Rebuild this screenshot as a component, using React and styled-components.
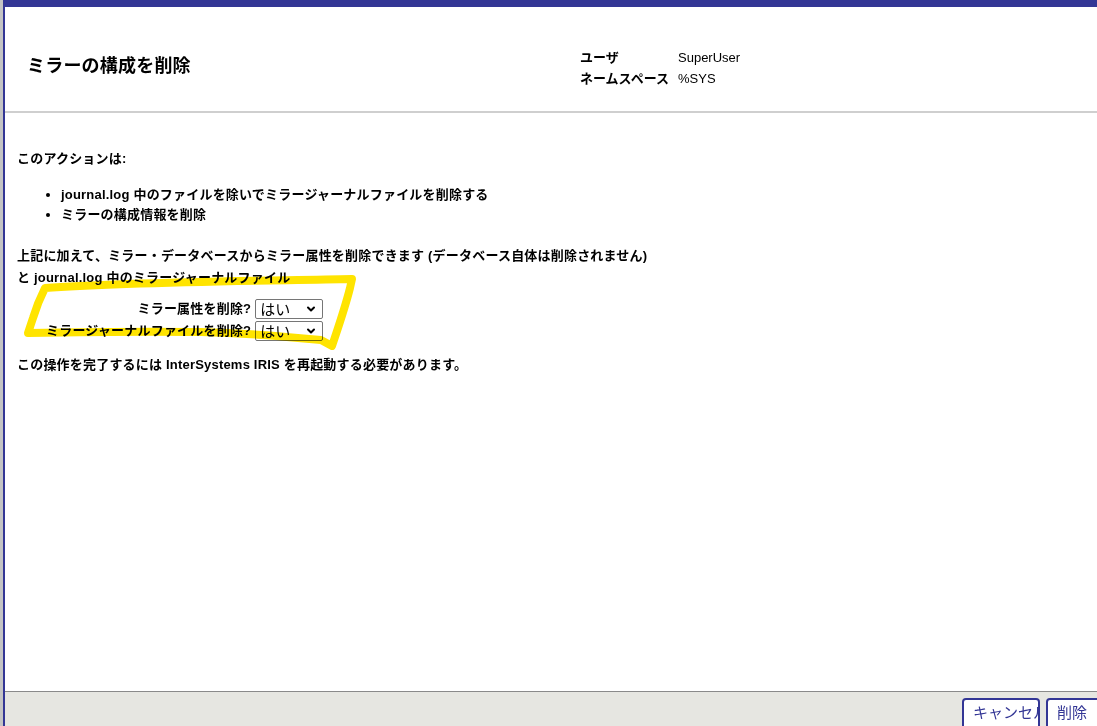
import React from "react";
import styled, { createGlobalStyle } from "styled-components";
import { ChevronDown } from "lucide-react";

const GlobalStyle = createGlobalStyle`
  html, body {
    margin: 0;
    padding: 0;
    background: #c4c4c4;
    overflow: hidden;
  }
  body {
    font-family: "Liberation Sans", "Noto Sans CJK JP", sans-serif;
    color: #000;
  }
`;

const Page = styled.div`
  display: flex;
  height: 726px;
  padding-left: 3px;
`;

const Dialog = styled.div`
  flex: 1;
  display: flex;
  flex-direction: column;
  background: #fff;
  border-top: 7px solid #333695;
  border-left: 2px solid #333695;
  min-width: 0;
`;

const Header = styled.div`
  display: flex;
  align-items: center;
  height: 106px;
  padding-top: 10px;
  box-sizing: border-box;
  border-bottom: 2px solid #cfcfcf;
`;

const Title = styled.h1`
  flex: 0 0 575px;
  margin: 0;
  padding-left: 22px;
  box-sizing: border-box;
  font-size: 18px;
  font-weight: bold;
  letter-spacing: 0.2px;
`;

const InfoTable = styled.div`
  display: grid;
  grid-template-columns: 98px auto;
  row-gap: 3px;
  font-size: 13px;
  line-height: 18px;
  margin-top: 8px;
`;

const InfoLabel = styled.div`
  font-weight: bold;
`;

const InfoValue = styled.div`
  font-weight: normal;
`;

const Content = styled.div`
  position: relative;
  flex: 1;
  padding: 36px 12px 0;
  font-size: 13px;
  font-weight: bold;
  letter-spacing: 0.2px;
`;

const Para = styled.p`
  margin: ${(p) => p.$mt || 0}px 0 0;
  line-height: ${(p) => p.$lh || 20}px;
`;

const List = styled.ul`
  margin: 16px 0 0;
  padding-left: 44px;
  line-height: 20px;
`;

const Form = styled.div`
  position: relative;
  display: grid;
  grid-template-columns: auto auto;
  justify-content: start;
  column-gap: 4px;
  row-gap: 2px;
  margin: 10px 0 0 29px;
  z-index: 1;
`;

const FieldLabel = styled.label`
  text-align: right;
  line-height: 20px;
  align-self: center;
`;

const SelectWrap = styled.span`
  position: relative;
  display: inline-block;
  width: 68px;
  height: 20px;
  svg {
    position: absolute;
    right: 6px;
    top: 4px;
    pointer-events: none;
  }
`;

const Select = styled.select`
  appearance: none;
  width: 100%;
  height: 100%;
  box-sizing: border-box;
  border: 1px solid #767676;
  border-radius: 2px;
  background: #fff;
  padding: 0 4px;
  font-family: "Liberation Sans", "Noto Sans CJK JP", sans-serif;
  font-size: 15px;
  font-weight: normal;
  color: #000;
`;

const Highlight = styled.svg`
  position: absolute;
  left: 0;
  top: 0;
  width: 400px;
  height: 260px;
  pointer-events: none;
  mix-blend-mode: multiply;
  z-index: 2;
`;

const Footer = styled.div`
  display: flex;
  justify-content: flex-end;
  gap: 6px;
  height: 35px;
  padding-top: 6px;
  box-sizing: border-box;
  background: #e6e6e1;
  border-top: 1px solid #8a8a8a;
  overflow: hidden;
  margin-right: -11px;
`;

const Button = styled.button`
  flex: 0 0 ${(p) => p.$w}px;
  height: 34px;
  box-sizing: border-box;
  border: 2px solid #333695;
  border-radius: 4px;
  background: #fff;
  color: #333695;
  font-family: "Liberation Sans", "Noto Sans CJK JP", sans-serif;
  font-size: 15px;
  text-align: left;
  padding: 0 0 8px 9px;
  white-space: nowrap;
  overflow: hidden;
`;

export default function App() {
  return (
    <>
      <GlobalStyle />
      <Page>
        <Dialog>
          <Header>
            <Title>ミラーの構成を削除</Title>
            <InfoTable>
              <InfoLabel>ユーザ</InfoLabel>
              <InfoValue>SuperUser</InfoValue>
              <InfoLabel>ネームスペース</InfoLabel>
              <InfoValue>%SYS</InfoValue>
            </InfoTable>
          </Header>
          <Content>
            <Para>このアクションは:</Para>
            <List>
              <li>journal.log 中のファイルを除いでミラージャーナルファイルを削除する</li>
              <li>ミラーの構成情報を削除</li>
            </List>
            <Para $mt={20} $lh={22}>
              上記に加えて、ミラー・データベースからミラー属性を削除できます (データベース自体は削除されません)
              <br />と journal.log 中のミラージャーナルファイル
            </Para>
            <Form>
              <FieldLabel>ミラー属性を削除?</FieldLabel>
              <SelectWrap>
                <Select defaultValue="yes">
                  <option value="yes">はい</option>
                  <option value="no">いいえ</option>
                </Select>
                <ChevronDown size={12} strokeWidth={4} />
              </SelectWrap>
              <FieldLabel>ミラージャーナルファイルを削除?</FieldLabel>
              <SelectWrap>
                <Select defaultValue="yes">
                  <option value="yes">はい</option>
                  <option value="no">いいえ</option>
                </Select>
                <ChevronDown size={12} strokeWidth={4} />
              </SelectWrap>
            </Form>
            <Para $mt={14}>この操作を完了するには InterSystems IRIS を再起動する必要があります。</Para>
            <Highlight viewBox="0 0 400 260">
              <path
                d="M40 175 C 120 169, 250 168, 347 166 L 345 175 C 340 195, 333 215, 327 233 L 316 227 C 276 223, 236 220, 196 219 C 136 218, 76 219, 23 220 L 28 205 C 31 195, 35 185, 40 175 Z"
                fill="none"
                stroke="#ffe400"
                strokeWidth="8"
                strokeLinejoin="round"
                strokeLinecap="round"
              />
            </Highlight>
          </Content>
          <Footer>
            <Button $w={78}>キャンセル</Button>
            <Button $w={62}>削除</Button>
          </Footer>
        </Dialog>
      </Page>
    </>
  );
}
